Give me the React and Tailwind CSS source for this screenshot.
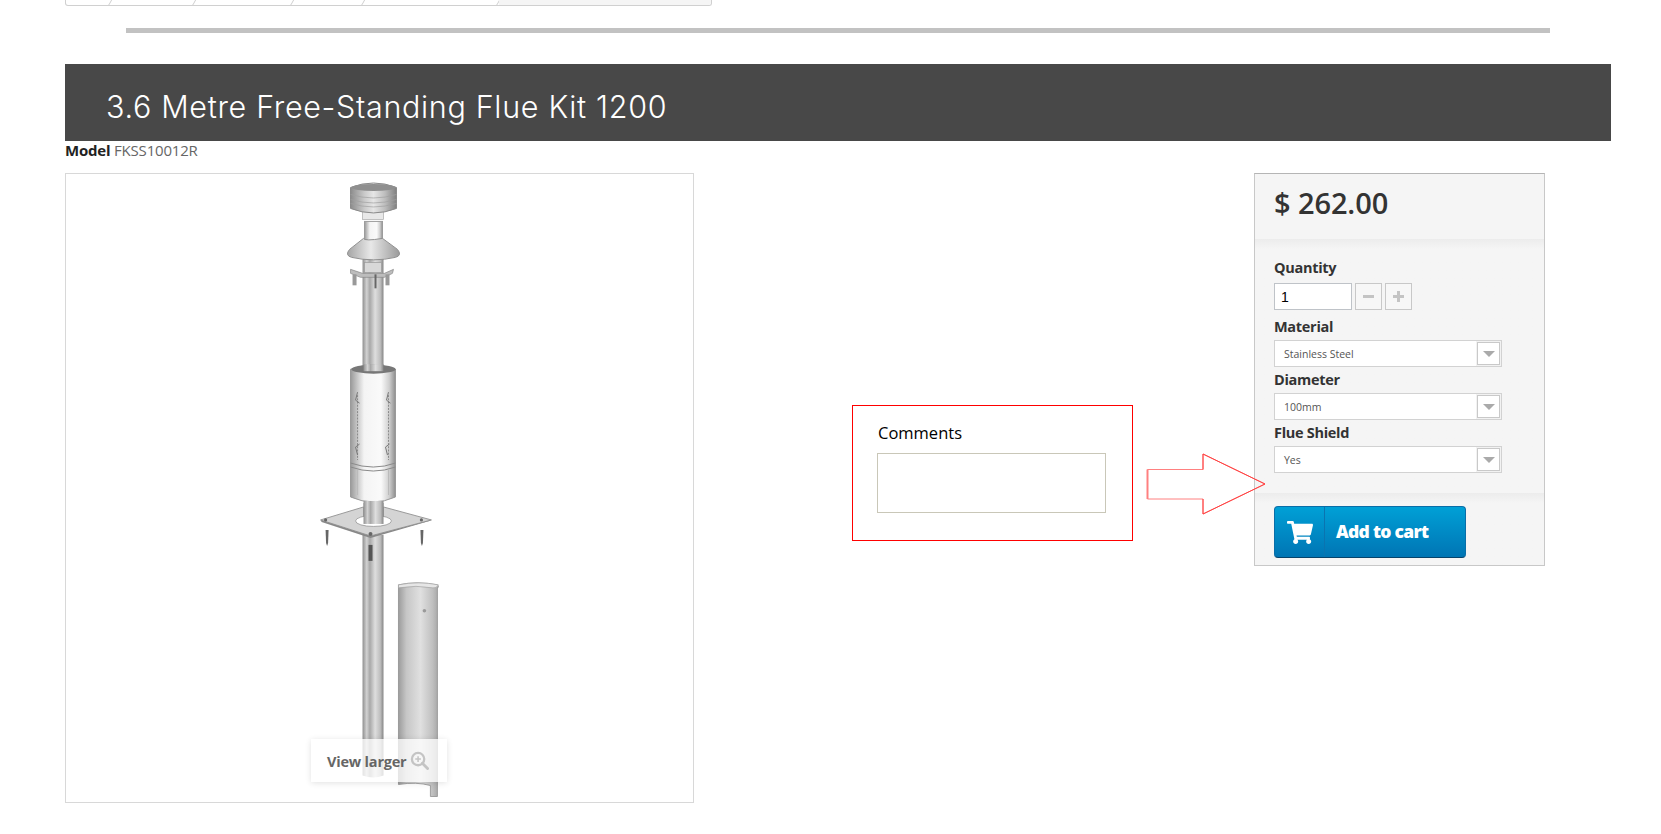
import React from "react";
import { FaShoppingCart } from "react-icons/fa";

const sans = "font-['Open_Sans','Liberation_Sans',sans-serif]";

function Crumb({ w, last }) {
  return (
    <div className={`relative h-full ${w} ${last ? "bg-[#f5f5f5] grow" : ""}`}>
      {!last && <div className="absolute right-0 top-[-4px] h-[12px] w-px -skew-x-[30deg] bg-[#cfcfcf]" />}
    </div>
  );
}

function Select({ value }) {
  return (
    <div className="flex h-[27px] w-[228px] items-center justify-between border border-[#d2d2d2] bg-white pr-px">
      <span className="pl-[9px] pt-[2px] text-[10.5px] text-[#555]">{value}</span>
      <span className="flex h-[23px] w-[23px] items-center justify-center border border-[#c9c9c9] bg-white shadow-[0_0_0_1px_#f2f2f2]">
        <span className="h-0 w-0 border-x-[6px] border-t-[6px] border-x-transparent border-t-[#aaa]" />
      </span>
    </div>
  );
}

function Label({ children }) {
  return <div className="h-[17px] text-[14.5px] leading-[17px] font-bold tracking-[-0.3px] text-[#333]">{children}</div>;
}

function FlueDrawing() {
  return (
    <svg viewBox="66 174 628 628" className="h-[628px] w-[627px]">
      <defs>
        <linearGradient id="metal" x1="0" x2="1" y1="0" y2="0">
          <stop offset="0" stopColor="#9a9a9a" />
          <stop offset="0.14" stopColor="#c4c4c4" />
          <stop offset="0.3" stopColor="#f4f4f4" />
          <stop offset="0.68" stopColor="#fafafa" />
          <stop offset="0.86" stopColor="#cfcfcf" />
          <stop offset="1" stopColor="#8e8e8e" />
        </linearGradient>
        <linearGradient id="cap" x1="0" x2="1" y1="0" y2="0">
          <stop offset="0" stopColor="#8c8c8c" />
          <stop offset="0.3" stopColor="#c9c9c9" />
          <stop offset="0.5" stopColor="#e6e6e6" />
          <stop offset="0.75" stopColor="#bdbdbd" />
          <stop offset="1" stopColor="#808080" />
        </linearGradient>
        <linearGradient id="pipe" x1="0" x2="1" y1="0" y2="0">
          <stop offset="0" stopColor="#8f8f8f" />
          <stop offset="0.2" stopColor="#d2d2d2" />
          <stop offset="0.35" stopColor="#a8a8a8" />
          <stop offset="0.6" stopColor="#dedede" />
          <stop offset="0.85" stopColor="#bdbdbd" />
          <stop offset="1" stopColor="#858585" />
        </linearGradient>
        <linearGradient id="shield" x1="0" x2="1" y1="0" y2="0">
          <stop offset="0" stopColor="#9c9c9c" />
          <stop offset="0.2" stopColor="#c6c6c6" />
          <stop offset="0.55" stopColor="#e0e0e0" />
          <stop offset="0.85" stopColor="#c0c0c0" />
          <stop offset="1" stopColor="#a6a6a6" />
        </linearGradient>
        <linearGradient id="cone" x1="0" x2="1" y1="0" y2="0">
          <stop offset="0" stopColor="#a5a5a5" />
          <stop offset="0.45" stopColor="#e8e8e8" />
          <stop offset="1" stopColor="#9a9a9a" />
        </linearGradient>
      </defs>

      {/* lower pipe */}
      <path d="M363 535h21v241q-10 4-21 0z" fill="url(#pipe)" />
      <rect x="369" y="545" width="4" height="16" fill="#555" />

      {/* upper pipe */}
      <rect x="363" y="258" width="21" height="112" fill="url(#pipe)" />
      {/* cap */}
      <rect x="363" y="208" width="21" height="11" fill="#e8e8e8" stroke="#aaa" strokeWidth="0.7" />
      <path d="M351 187q23-9 46 0v21q-23 9-46 0z" fill="url(#cap)" stroke="#8a8a8a" />
      <ellipse cx="374" cy="187" rx="22" ry="3.5" fill="#8f8f8f" />
      <path d="M351 194q23 7 46 0M351 199q23 7 46 0M351 203q23 7 46 0" stroke="#a0a0a0" strokeWidth="0.7" fill="none" />
      {/* flashing */}
      <rect x="365" y="221" width="18" height="20" fill="url(#metal)" stroke="#9c9c9c" />
      <path d="M364 238q1 3 19 0l15 11q5 6-2 8q-22 5-44 0q-7-2-2-8z" fill="url(#cone)" stroke="#909090" />
      {/* bracket */}
      <path d="M351 269l12 4h22l9-4 -1 4-8 4h-24l-10-4z" fill="#bdbdbd" stroke="#888" strokeWidth="0.7" />
      <rect x="353" y="274" width="4" height="11" fill="#999" />
      <rect x="386" y="274" width="4" height="11" fill="#999" />
      <rect x="375" y="274" width="2" height="14" fill="#666" />
      <rect x="365" y="262" width="17" height="10" fill="#d8d8d8" stroke="#999" strokeWidth="0.7" />

      {/* telescopic sleeve */}
      <path d="M351 369q23-8 45 0v128q-22 10-45 0z" fill="url(#metal)" stroke="#999" />
      <ellipse cx="374" cy="369" rx="22" ry="4.5" fill="#777" />
      <rect x="364" y="364" width="20" height="7" fill="url(#pipe)" />
      <path d="M351 463q23 8 45 0M351 467q23 8 45 0" stroke="#8a8a8a" fill="none" />
      <path d="M358 395v65M389 395v65" stroke="#8a8a8a" strokeDasharray="2 1.2" fill="none" />
      <path d="M358 392l-2 8 4 3M389 392l-2 8 4 3M358 455l-2-8 4-3M388 455l-2-8 4-3" stroke="#777" fill="none" />
      <path d="M358 470v25M389 470v25" stroke="#bbb" fill="none" />

      {/* plate */}
      <rect x="364" y="501" width="20" height="14" fill="url(#pipe)" />
      <path d="M321 520l43-13v13h20v-13l48 13-61 16z" fill="#d4d4d4" stroke="#9a9a9a" />
      <path d="M321 520l50 16 61-16-2 1-59 17-49-16z" fill="#888" />
      <ellipse cx="374" cy="521" rx="18" ry="5.5" fill="#fff" stroke="#888" strokeWidth="0.7" />
      <rect x="364" y="503" width="20" height="21" fill="url(#pipe)" />
      <circle cx="326" cy="520" r="1.6" fill="#666" />
      <circle cx="422" cy="520" r="1.6" fill="#666" />
      <circle cx="371" cy="534" r="2" fill="#666" />
      <path d="M326 530h3l-.5 13-1 3-1-3z" fill="#666" />
      <path d="M421 530h3l-.5 13-1 3-1-3z" fill="#666" />

      {/* shield */}
      <path d="M399 585q18-4 39 0q2 1 0 4v208h-7v-11q-14-4-32-1z" fill="url(#shield)" stroke="#8f8f8f" strokeWidth="0.8" />
      <path d="M399 585q20-4 40 0q-2 4-6 3q-16-3-34 0z" fill="#e6e6e6" stroke="#a3a3a3" strokeWidth="0.7" />
      <circle cx="425" cy="611" r="1.8" fill="#9a9a9a" />
    </svg>
  );
}

export default function App() {
  return (
    <div className={`${sans} h-[834px] w-full overflow-hidden bg-white`}>
      <div className="ml-[65px] flex h-[6px] w-[647px] overflow-hidden rounded-b-[3px] border border-t-0 border-[#d0d0d0]">
        <Crumb w="w-[45px]" />
        <Crumb w="w-[84px]" />
        <Crumb w="w-[98px]" />
        <Crumb w="w-[71px]" />
        <Crumb w="w-[135px]" />
        <Crumb last w="" />
      </div>

      <div className="ml-[126px] mt-[22px] h-[5px] w-[1424px] bg-[#c2c2c2]" />

      <h1 className="ml-[65px] mt-[31px] flex h-[77px] w-[1546px] items-center bg-[#484848] pl-[41px] pt-[8px] font-['Inter',sans-serif] text-[30.5px] font-light tracking-[0.67px] text-white">
        3.6 Metre Free-Standing Flue Kit 1200
      </h1>

      <div className="ml-[65px] h-[18px] text-[15px] leading-[18px] tracking-[-0.2px] text-[#666]">
        <span className="font-bold text-[#222]">Model</span> FKSS10012R
      </div>

      <div className="ml-[65px] mt-[14px] flex items-start">
        <div className="relative h-[630px] w-[629px] border border-[#d8d8d8]">
          <FlueDrawing />
          <div className="absolute left-[245px] top-[565px] flex h-[43px] w-[136px] items-center bg-white/75 pl-[16px] pt-[2px] text-[14.5px] font-bold tracking-[-0.2px] text-[#666] shadow-[0_1px_6px_rgba(0,0,0,0.12)]">
            View larger
            <svg viewBox="0 0 20 20" className="ml-[3px] -mt-[2px] h-[19px] w-[19px]">
              <circle cx="8.5" cy="8.5" r="6.5" fill="none" stroke="#c4c4c4" strokeWidth="2.4" />
              <path d="M13 13l5.5 5.5" stroke="#c4c4c4" strokeWidth="3" strokeLinecap="round" />
              <path d="M8.5 5.5v6M5.5 8.5h6" stroke="#c4c4c4" strokeWidth="1.6" />
            </svg>
          </div>
        </div>

        <div className="ml-[158px] mt-[232px] h-[136px] w-[281px] border border-[#ff0000] pl-[24px]">
          <div className="mt-[16px] h-[22px] pl-px text-[16.5px] leading-[22px] text-black">Comments</div>
          <div className="mt-[9px] h-[60px] w-[229px] border border-[#c9c7b8] bg-white" />
        </div>

        <svg viewBox="0 0 120 62" className="z-10 ml-[13px] mt-[280px] h-[62px] w-[120px] shrink-0">
          <path d="M1.5 16.5H57V1l62 30L57 61V46H1.5z" fill="none" stroke="#ff8080" strokeWidth="1" />
          <path d="M57 16.5V1l62 30L57 61V46" fill="none" stroke="#ff4040" strokeWidth="1" />
          <path d="M1.5 16.5V46" stroke="#ff8080" strokeWidth="2" />
        </svg>

        <div className="-ml-[12px] h-[393px] w-[291px] shrink-0 border border-[#c8c8c8] border-t-[#b5b5b5] bg-[#f5f5f5]">
          <div className="flex h-[65px] items-center px-[19px] pb-[7px] text-[29px] font-semibold tracking-[-0.1px] text-[#333]">$ 262.00</div>
          <div className="h-[254px] bg-gradient-to-b from-[#ececec] to-[#f5f5f5] to-[10px] px-[19px] pt-[20px]">
            <Label>Quantity</Label>
            <div className="mt-[7px] flex h-[27px] items-center gap-[3px]">
              <div className="flex h-[27px] w-[78px] items-center border border-[#bfc3c8] bg-white pl-[6px] pt-px font-['Liberation_Sans',sans-serif] text-[14px] text-black">1</div>
              <div className="flex h-[27px] w-[27px] items-center justify-center border border-[#c8c8c8] bg-[#f7f7f7]">
                <span className="h-[3px] w-[11px] bg-[#c4c4c4]" />
              </div>
              <div className="relative flex h-[27px] w-[27px] items-center justify-center border border-[#c8c8c8] bg-[#f7f7f7]">
                <span className="h-[3px] w-[11px] bg-[#c4c4c4]" />
                <span className="absolute h-[11px] w-[3px] bg-[#c4c4c4]" />
              </div>
            </div>
            <div className="mt-[8px]"><Label>Material</Label></div>
            <div className="mt-[5px]"><Select value="Stainless Steel" /></div>
            <div className="mt-[4px]"><Label>Diameter</Label></div>
            <div className="mt-[5px]"><Select value="100mm" /></div>
            <div className="mt-[4px]"><Label>Flue Shield</Label></div>
            <div className="mt-[5px]"><Select value="Yes" /></div>
          </div>
          <div className="h-[72px] bg-gradient-to-b from-[#ececec] to-[#f5f5f5] to-[10px] px-[19px] pt-[13px]">
            <div className="flex h-[52px] w-[192px] items-center rounded-[4px] border border-[#0a6ea8] border-b-[#06436b] bg-gradient-to-b from-[#00a0d6] to-[#0075b4] text-white">
              <div className="flex h-full w-[50px] items-center justify-center border-r border-[#0a74b0] pl-px">
                <FaShoppingCart className="h-[25px] w-[26px]" />
              </div>
              <span className="ml-[11px] -mt-px text-[17.5px] font-extrabold tracking-[-0.7px]">Add to cart</span>
            </div>
          </div>
        </div>
      </div>
    </div>
  );
}
